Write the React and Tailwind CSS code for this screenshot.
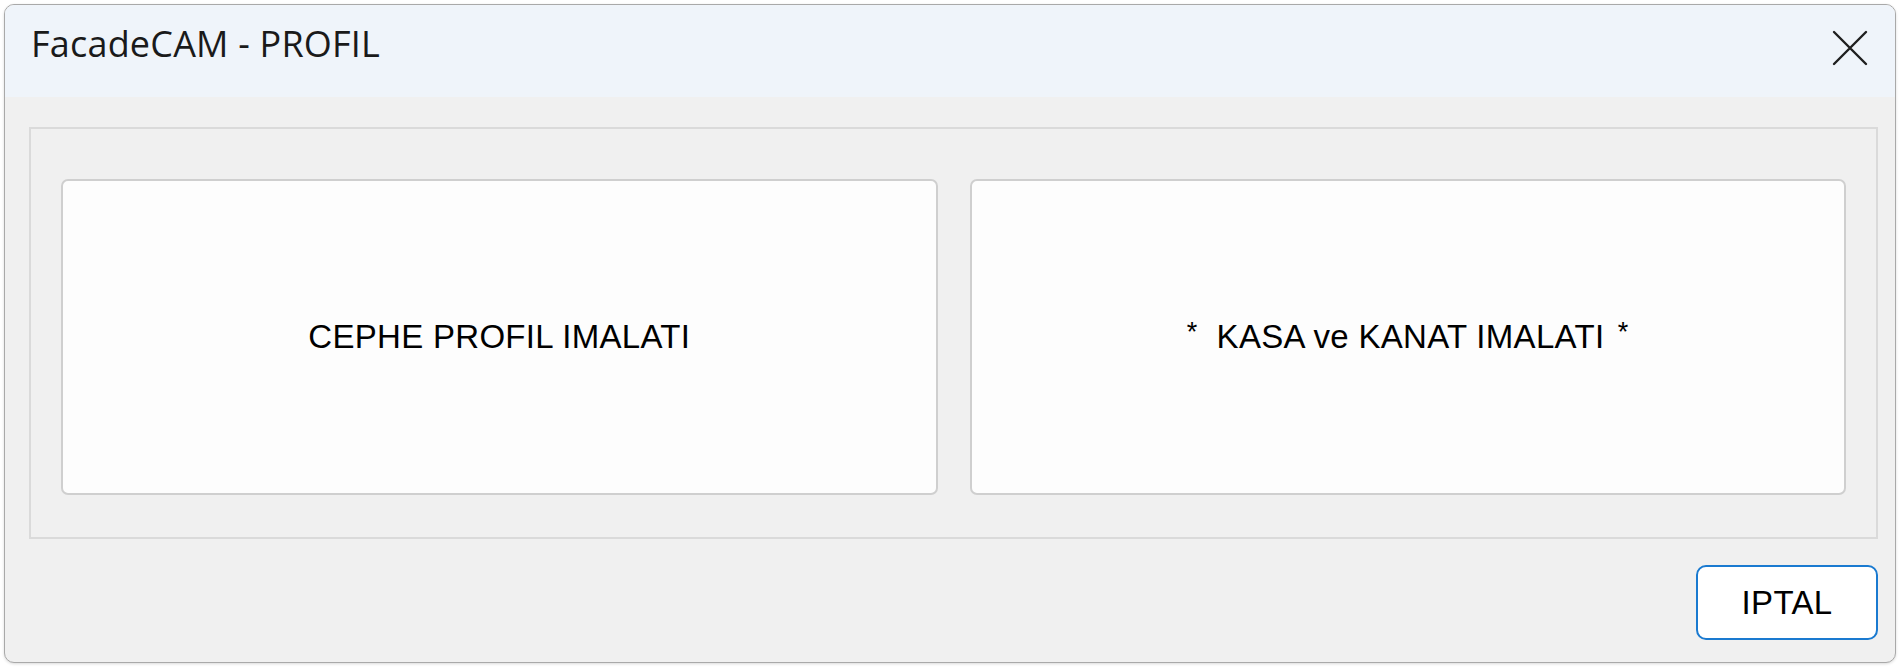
import React from "react";

export default function App() {
  return (
    <div className="w-[1901px] h-[667px] bg-white pt-[4px] pl-[4px]">
      <div className="w-[1892px] h-[659px] rounded-[10px] border border-[#a9a9a9] bg-[#f0f0f0] overflow-hidden flex flex-col shadow-[0_1px_3px_rgba(0,0,0,0.15)]">
        {/* Title bar */}
        <div className="h-[92px] shrink-0 bg-[#eff4fa] flex items-start justify-between pl-[26px] pr-[27px] pt-[15px]">
          <span
            className="text-[36px] leading-[48px] tracking-[0.2px] text-[#1a1a1a]"
            style={{ fontFamily: '"Open Sans", "Noto Sans", sans-serif' }}
          >
            FacadeCAM - PROFIL
          </span>
          <svg width="36" height="36" viewBox="0 0 36 36" className="mt-[10px]">
            <path d="M2 2 L34 34 M34 2 L2 34" stroke="#1f1f1f" strokeWidth="2.4" strokeLinecap="round" />
          </svg>
        </div>
        {/* Body */}
        <div className="flex-1 flex flex-col pl-[24px] pr-[17px] pt-[30px]">
          <div className="h-[412px] border-2 border-[#dadada] flex gap-[32px] pt-[50px] px-[30px]">
            <div className="flex-1 h-[316px] bg-[#fdfdfd] border-2 border-[#cfcfcf] rounded-[7px] flex items-center justify-center">
              <span
                className="text-[33px] tracking-[0.3px] text-black whitespace-pre"
                style={{ fontFamily: '"Liberation Sans", Arial, sans-serif' }}
              >
                CEPHE PROFIL IMALATI
              </span>
            </div>
            <div className="flex-1 h-[316px] bg-[#fdfdfd] border-2 border-[#cfcfcf] rounded-[7px] flex items-center justify-center">
              <span
                className="text-[33px] tracking-[0.3px] text-black whitespace-pre"
                style={{ fontFamily: '"Liberation Sans", Arial, sans-serif' }}
              >
                <span className="text-[27px] relative top-[-7px]">*</span>
                {"  KASA ve KANAT IMALATI "}
                <span className="text-[27px] relative top-[-7px] ml-[4px]">*</span>
              </span>
            </div>
          </div>
          <div className="flex justify-end pt-[26px]">
            <div className="w-[182px] h-[75px] rounded-[10px] border-2 border-[#1a7ad0] bg-white flex items-center justify-center">
              <span
                className="text-[33px] tracking-[0.3px] text-black"
                style={{ fontFamily: '"Liberation Sans", Arial, sans-serif' }}
              >
                IPTAL
              </span>
            </div>
          </div>
        </div>
      </div>
    </div>
  );
}
